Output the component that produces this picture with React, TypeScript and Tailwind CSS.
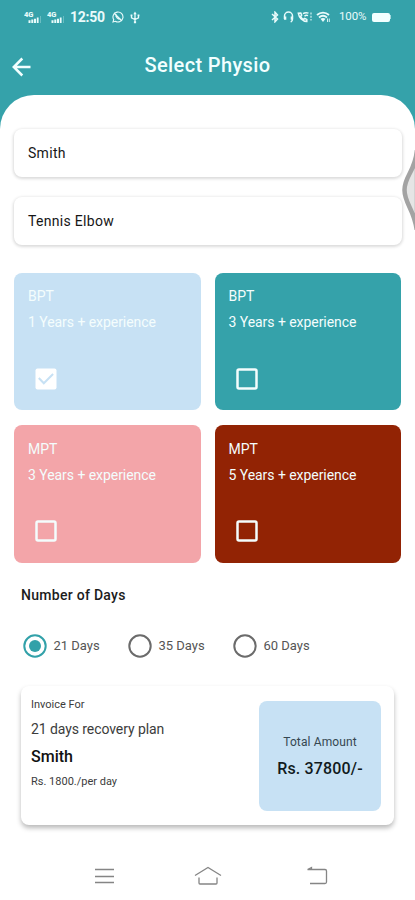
import React from "react";

const Signal = () => (
  <svg width="18" height="14" viewBox="0 0 18 14" fill="#e9fbfb">
    <text x="0" y="7" fontSize="7.500" fontWeight="900" fontFamily="Roboto, sans-serif">4G</text>
    <path d="M4.500 10.300h2v2.700h-2zM7.300 9.500h2V13h-2zM10 8.700h2V13h-2zM12.800 7.500h1.800V13h-1.800z" />
    <path d="M16 6h1v7h-1z" opacity=".3" />
  </svg>
);

function StatusBar() {
  return (
    <div className="flex h-[34px] items-center justify-between pl-[24px] pr-[24px] text-[#e9fbfb]">
      <div className="flex items-center">
        <div className="flex gap-[5px]">
          <Signal />
          <Signal />
        </div>
        <span className="ml-[5px] w-[34px] whitespace-nowrap text-[14px] font-bold leading-none tracking-[-0.25px]">12:50</span>
        <svg className="ml-[8px]" width="12" height="12" viewBox="0 0 12 12" fill="none" stroke="currentColor" strokeWidth="1.1">
          <path d="M1 11l.7-2.4A5 5 0 1 1 3.4 10.300z" />
          <path d="M3.800 3.400c-.6 2.200 2.300 5.200 4.700 4.700M3.800 3.400l1.200 1.400M8.500 8.100L7 6.900M2 2l8 8" />
        </svg>
        <svg className="ml-[6px]" width="10" height="13" viewBox="0 0 10 13" fill="none" stroke="currentColor" strokeWidth="1.300">
          <path d="M5 2v9M1.500 4.500v2.300L5 8.600l3.500-1.800V4.500" />
          <path d="M3.300 3.200L5 .4l1.700 2.800zM3.900 10.200h2.200V12.200H3.900zM.6 3.500h1.800v1.800H.6zM7.600 3.500h1.800v1.800H7.600z" fill="currentColor" stroke="none" />
        </svg>
      </div>
      <div className="flex items-center">
        <svg width="8" height="12" viewBox="0 0 8 12" fill="none" stroke="currentColor" strokeWidth="1.500">
          <path d="M1 3l5.500 5L4 10.800V1.200L6.500 4 1 9" />
        </svg>
        <svg className="ml-[4px]" width="11" height="12" viewBox="0 0 11 12" fill="none" stroke="currentColor" strokeWidth="1.500">
          <path d="M1.500 8V5a4 4 0 0 1 8 0v3c0 1.500-.6 2.500-1.800 3" />
          <path d="M1 5.500h2.300v3.300H1zM7.700 5.500H10v3.300H7.700z" fill="currentColor" stroke="none" />
        </svg>
        <svg className="ml-[3px]" width="16" height="12" viewBox="0 0 16 12" fill="none" stroke="currentColor" strokeWidth="1.500">
          <path d="M1.300 2.200c.6 4.300 4.200 8 8.500 8.300V8.400L7.700 7.500 6.500 8.600C5 7.800 4.200 6.800 3.700 5.300l1-1.200L3.800 2z" />
          <path d="M6 2.700a6 6 0 0 1 5.500-.6M7.500 5.200a3 3 0 0 1 3.500-.5" />
          <path d="M14 1.500v2M14 4.800v2M14 8v1.500" opacity=".7" />
        </svg>
        <svg className="ml-[3px]" width="16" height="12" viewBox="0 0 16 12" fill="none" stroke="currentColor" strokeWidth="1.800">
          <path d="M1 4c3.500-3.300 8.500-3.300 12 0M3 6.500c2.500-2.200 5.500-2.200 8 0" />
          <path d="M4.500 7.800Q7 6.400 9.500 7.800L7 11z" fill="currentColor" stroke="none" />
          <path d="M11.500 7.500V11M13.300 7.500V11" strokeWidth=".9" />
        </svg>
        <span className="ml-[7px] w-[28px] whitespace-nowrap text-[11.5px] leading-none tracking-[-0.1px]">100%</span>
        <span className="ml-[5px] flex items-center">
          <span className="block h-[9px] w-[18px] rounded-[2px] bg-[#f2ffff]" />
          <span className="block h-[4px] w-px bg-[#a4dade]" />
        </span>
      </div>
    </div>
  );
}

function Field({ children }: { children: React.ReactNode }) {
  return (
    <div className="flex h-[48px] items-center rounded-[8px] bg-white px-[14px] text-[14px] tracking-[0.3px] text-[#161616] shadow-[0_1px_3px_1px_rgba(0,0,0,0.14)]">
      {children}
    </div>
  );
}

type PlanProps = { title: string; years: string; color: string; checked?: boolean };

function Plan({ title, years, color, checked }: PlanProps) {
  return (
    <div className={`flex flex-col items-start rounded-[8px] pl-[14px] pt-[13.9px] text-[14px] leading-[20px] text-[#f4fdfd] ${color}`}>
      <div>{title}</div>
      <div className="mt-[6px] whitespace-nowrap tracking-[-0.05px]">{years} Years + experience</div>
      <div className="ml-[7px] mt-[35.4px] flex size-[22px] items-center justify-center rounded-[2px]">
        {checked ? (
          <svg width="22" height="22" viewBox="0 0 22 22">
            <rect x=".5" y=".5" width="21" height="21" rx="2" fill="#fff" />
            <path d="M3.800 10l5 5.300 9.300-9.300" fill="none" stroke="#c7e1f4" strokeWidth="2" />
          </svg>
        ) : (
          <svg width="22" height="22" viewBox="0 0 22 22">
            <rect x="1.500" y="1.500" width="19" height="19" rx="1.500" fill="none" stroke="currentColor" strokeWidth="2.500" />
          </svg>
        )}
      </div>
    </div>
  );
}

function Radio({ label, selected }: { label: string; selected?: boolean }) {
  return (
    <div className="flex w-[105px] items-center">
      <svg width="24" height="24" viewBox="0 0 24 24" fill="none">
        <circle cx="12" cy="12" r="10.700" stroke={selected ? "#32a1a9" : "#6b6b6b"} strokeWidth="2" />
        {selected && <circle cx="12" cy="12" r="6" fill="#32a1a9" />}
      </svg>
      <span className="ml-[6.5px] whitespace-nowrap text-[13px] text-[#555]">{label}</span>
    </div>
  );
}

export default function App() {
  return (
    <div className="relative h-[900px] w-[415px] overflow-hidden bg-[#35a2aa] font-['Roboto',sans-serif]">
      <StatusBar />
      <header className="grid h-[61px] grid-cols-[42px_1fr_42px] items-center">
        <svg className="ml-[12px] mt-[5px]" width="20" height="20" viewBox="0 0 20 20" fill="none" stroke="#f2ffff" strokeWidth="2.500">
          <path d="M18.500 10H2M10.300 1.500L1.800 10l8.500 8.500" />
        </svg>
        <h1 className="mt-px text-center text-[20px] font-medium tracking-[0.37px] text-[#f2ffff]">Select Physio</h1>
      </header>

      <main className="flex h-[805px] flex-col rounded-t-[34px] bg-white pt-[34px]">
        <div className="flex flex-col gap-[20px] pl-[14px] pr-[13.5px]">
          <Field>Smith</Field>
          <Field>Tennis Elbow</Field>
        </div>

        <div className="mt-[27.5px] grid auto-rows-[137.75px] grid-cols-2 gap-x-[14px] gap-y-[14.5px] pl-[14px] pr-[14px]">
          <Plan title="BPT" years="1" color="bg-[#c7e1f4]" checked />
          <Plan title="BPT" years="3" color="bg-[#35a2aa]" />
          <Plan title="MPT" years="3" color="bg-[#f3a5a9]" />
          <Plan title="MPT" years="5" color="bg-[#922304]" />
        </div>

        <h2 className="ml-[21px] mt-[22px] text-[14px] font-medium leading-[20px] tracking-[0.28px] text-[#1c1c1c]">Number of Days</h2>
        <div className="ml-[23px] mt-[29px] flex">
          <Radio label="21 Days" selected />
          <Radio label="35 Days" />
          <Radio label="60 Days" />
        </div>

        <section className="ml-[21px] mt-[28.5px] flex h-[139px] w-[373px] justify-between rounded-[8px] bg-white pl-[10px] pr-[13px] shadow-[0_3px_5px_0px_rgba(0,0,0,0.28)]">
          <div className="pt-[12px] text-[#3c3c3c]">
            <p className="text-[11px] leading-[14px]">Invoice For</p>
            <p className="mt-[8px] text-[14px] leading-[18px] tracking-[-0.08px]">21 days recovery plan</p>
            <p className="mt-[8.5px] text-[16px] font-medium leading-[20px] text-[#111]">Smith</p>
            <p className="mt-[8.500px] text-[11px] leading-[14px]">Rs. 1800./per day</p>
          </div>
          <div className="mt-[15px] flex h-[110px] w-[122px] flex-col items-center rounded-[8px] bg-[#c7e1f4] pt-[33px]">
            <p className="text-[12px] leading-[16px] tracking-[0.12px] text-[#364751]">Total Amount</p>
            <p className="mt-[9px] whitespace-nowrap text-[16px] font-medium leading-[20px] tracking-[0.15px] text-[#111a20]">Rs. 37800/-</p>
          </div>
        </section>

        <nav className="mt-[39px] flex items-center pl-[94px] text-[#858585]">
          <svg width="21" height="24" viewBox="0 0 21 24" fill="none" stroke="currentColor" strokeWidth="1.300">
            <path d="M1 5.500h19M1 12.500h19M1 18.500h19" />
          </svg>
          <svg className="ml-[79px]" width="28" height="24" viewBox="0 0 28 24" fill="none" stroke="currentColor" strokeWidth="1.300">
            <path d="M1 11.500L14 3.500l13 8M5 13.500V19q0 1 1 1h16q1 0 1-1v-5.500" />
          </svg>
          <svg className="ml-[84px]" width="22" height="24" viewBox="0 0 22 24" fill="none" stroke="currentColor" strokeWidth="1.300">
            <path d="M1.500 5.500H19q1.500 0 1.500 1.500v11q0 1.500-1.500 1.500H4M1.500 5.500l4-2v2" />
          </svg>
        </nav>
      </main>

      <svg className="absolute right-0 top-[150px]" width="14" height="80" viewBox="0 0 14 80">
        <path d="M16 0C14 22 3.500 26 3.500 40S14 60 16 82z" fill="#e5e5e5" stroke="#a3a3a3" strokeWidth="4.500" />
      </svg>
    </div>
  );
}
